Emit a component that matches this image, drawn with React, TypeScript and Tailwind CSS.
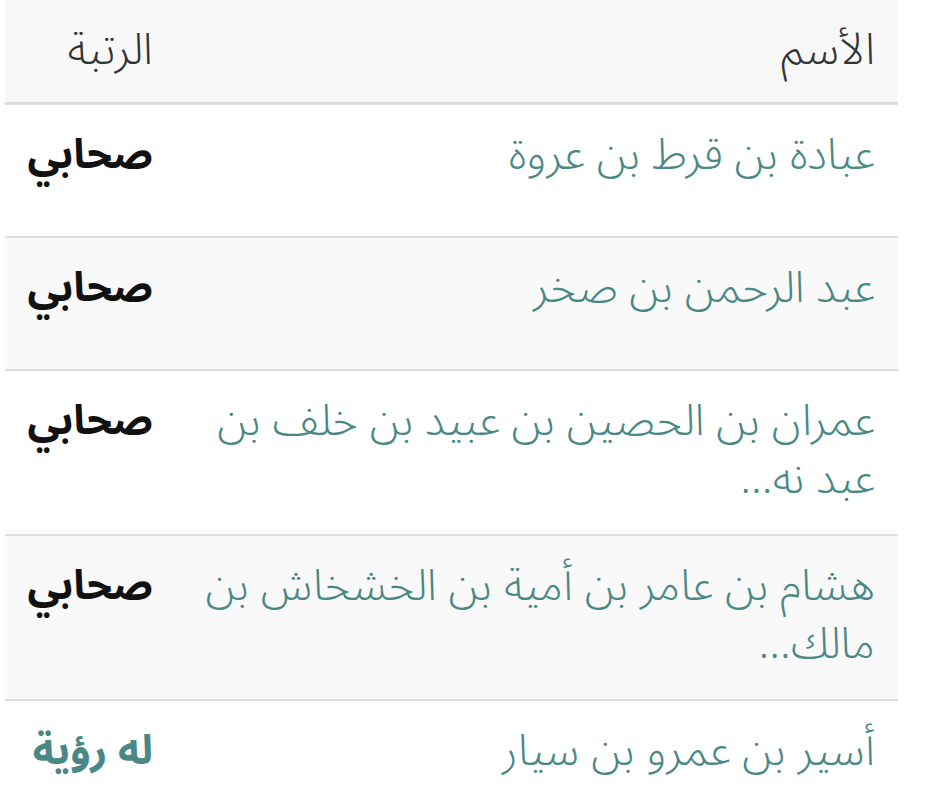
export default function App() {
  const rows = [
    { name: 'عبادة بن قرط بن عروة', rank: 'صحابي', teal: false },
    { name: 'عبد الرحمن بن صخر', rank: 'صحابي', teal: false },
    { name: 'عمران بن الحصين بن عبيد بن خلف بن عبد نه...', rank: 'صحابي', teal: false },
    { name: 'هشام بن عامر بن أمية بن الخشخاش بن مالك...', rank: 'صحابي', teal: false },
    { name: 'أسير بن عمرو بن سيار', rank: 'له رؤية', teal: true },
  ]

  return (
    <div className="min-h-screen bg-white pl-[5px] pr-[28px]" style={{ fontFamily: '"Noto Sans Arabic", "DejaVu Sans", sans-serif' }}>
      <div dir="rtl" className="w-full">
        {/* Header */}
        <div className="flex items-center h-[105px] bg-[#f8f8f8] border-b-[3px] border-[#dcdcdc] text-[44px] leading-[58px] text-[#333] font-light">
          <div className="flex-1 pr-[23px] pl-[23px] pb-[2px]">الأسم</div>
          <div className="w-[171px] pr-[23px] pl-[22px] pb-[2px]">الرتبة</div>
        </div>

        {rows.map((row, i) => (
          <div
            key={i}
            className={`flex items-start min-h-[133px] pt-[21px] pb-[26px] border-b-2 border-[#dedede] text-[44px] leading-[58px] ${
              i % 2 === 1 ? 'bg-[#f9f9f9]' : 'bg-white'
            }`}
          >
            <div className="flex-1 pr-[23px] pl-[23px] text-[#4a8886] font-light">{row.name}</div>
            <div className={`w-[171px] pr-[23px] pl-[20px] text-[41px] font-bold ${row.teal ? 'text-[#4a8886]' : 'text-[#111]'}`}>
              {row.rank}
            </div>
          </div>
        ))}
      </div>
    </div>
  )
}
